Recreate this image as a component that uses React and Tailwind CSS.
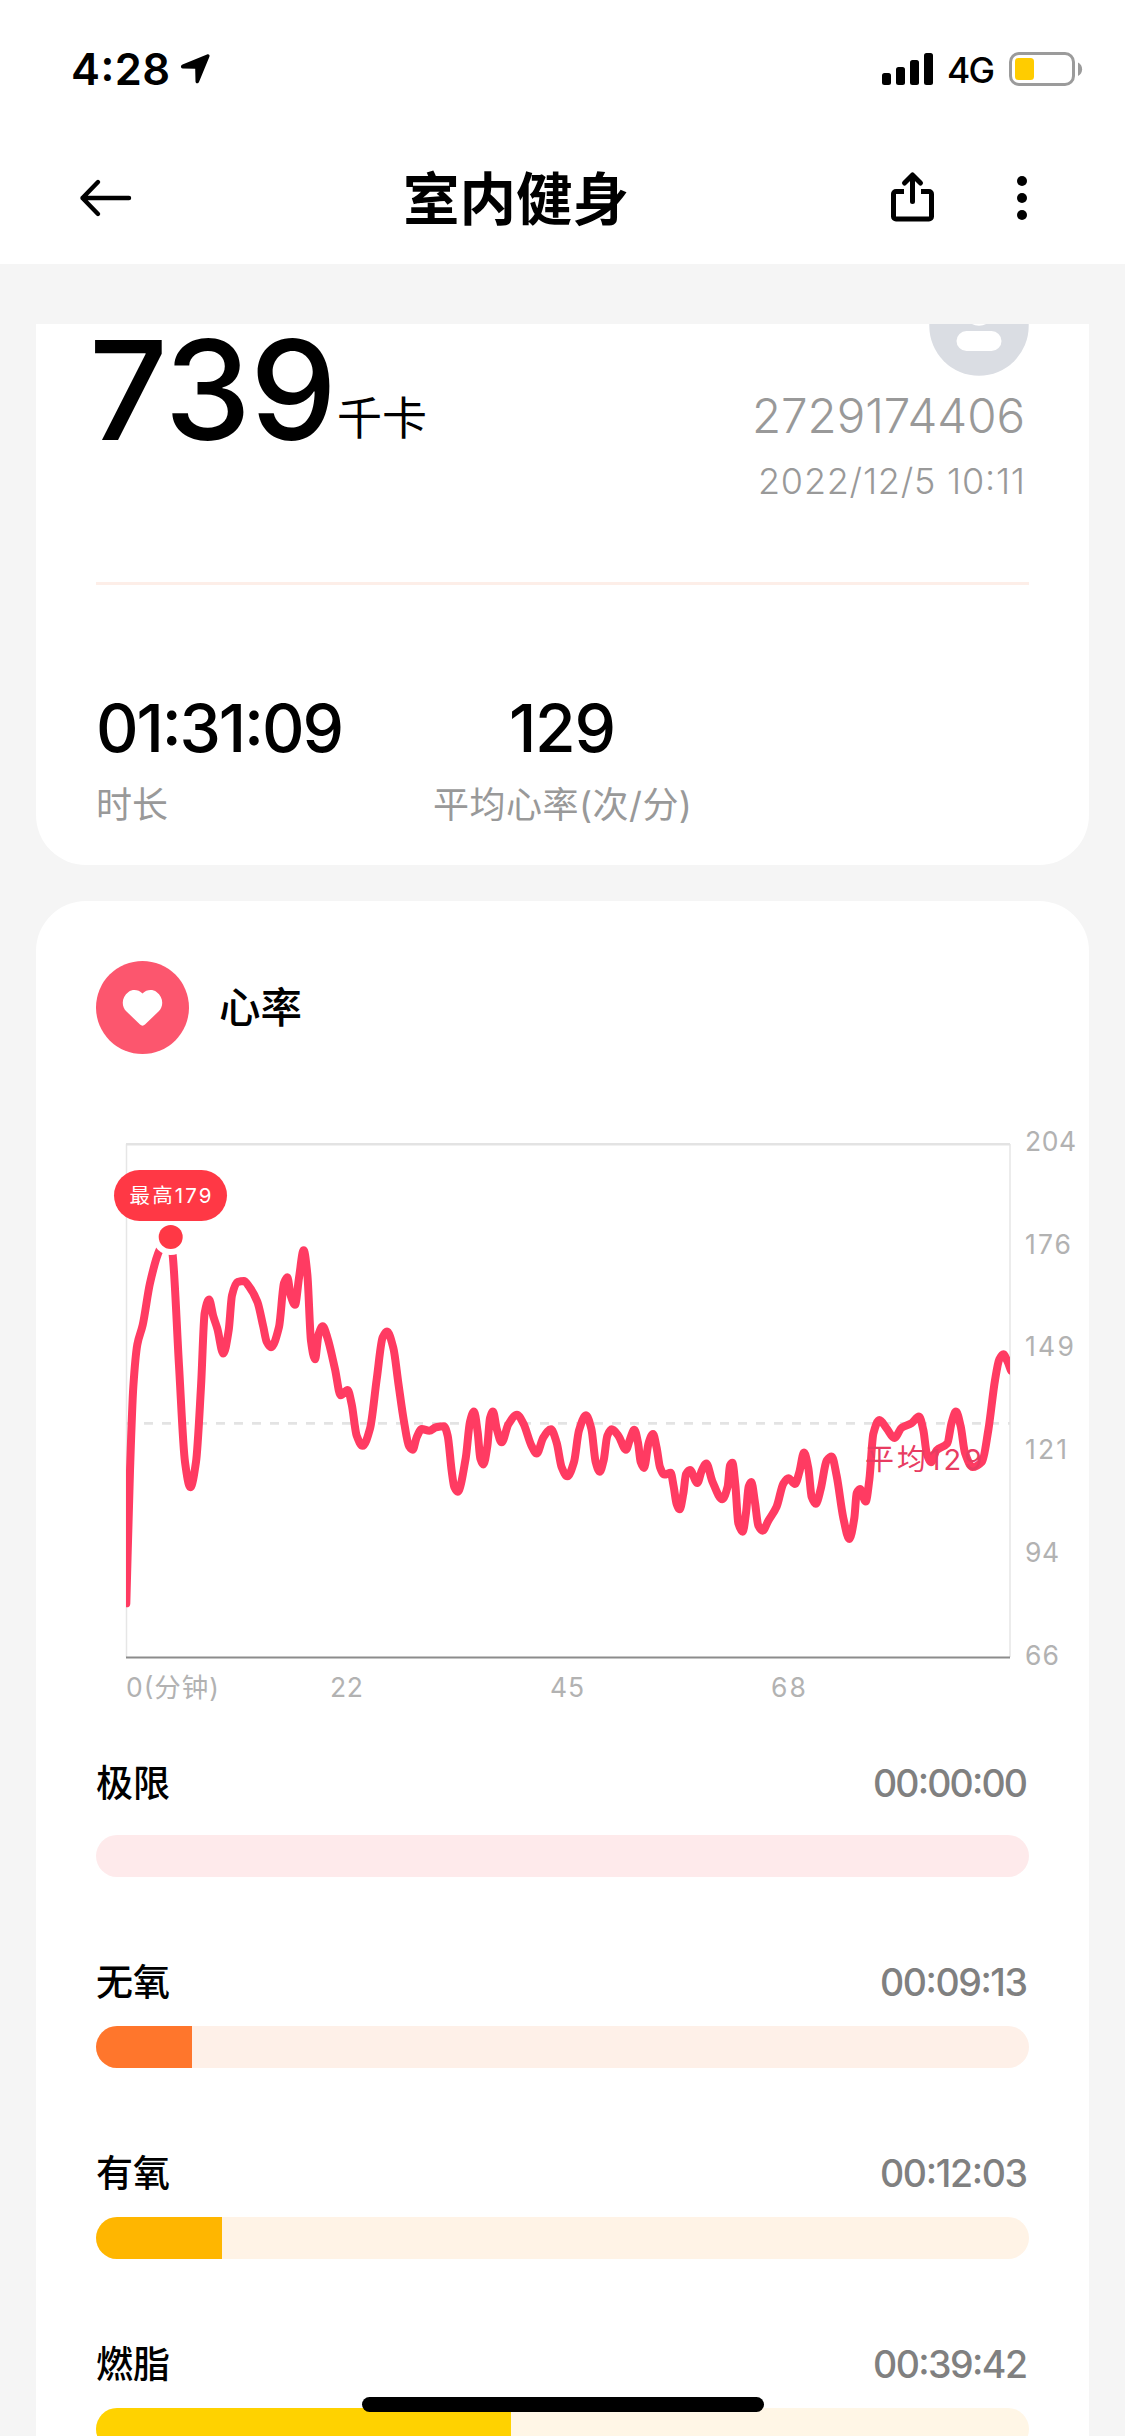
import React from "react";

const FONT = "font-['Inter','Noto_Sans_CJK_SC',sans-serif]";

const BLOCKS = [
  {
    x: 100,
    k: 2.851,
    pts: [
      [79, 1378], [90, 1000], [100, 760], [112, 640], [128, 585], [150, 465], [178, 372], [208, 330],
      [218, 385], [237, 700], [255, 975], [271, 1047], [288, 975], [303, 760], [314, 550], [327, 512],
      [340, 560], [352, 595], [370, 666], [386, 600], [396, 500], [412, 462], [432, 459], [446, 473],
      [472, 518], [490, 590], [500, 632], [513, 648], [537, 590], [552, 465], [562, 448], [572, 500],
      [585, 527], [597, 450], [611, 371], [622, 440], [633, 630], [645, 682], [656, 610], [668, 588],
      [682, 620], [705, 710], [722, 785], [743, 770], [755, 810], [770, 900], [788, 929], [810, 880],
      [830, 740], [848, 620], [861, 603], [880, 650], [895, 750], [912, 860], [927, 930], [938, 940],
      [950, 905], [965, 881], [988, 886], [1008, 876], [1032, 873], [1043, 900], [1055, 1000], [1063, 1047],
    ],
  },
  {
    x: 400,
    k: 2.851,
    pts: [
      [173, 1060], [197, 965], [210, 860], [222, 831], [233, 890], [241, 965], [250, 982], [262, 930],
      [270, 850], [279, 831], [290, 880], [305, 919], [325, 868], [351, 840], [370, 865], [395, 930],
      [410, 951], [430, 905], [453, 882], [470, 920], [485, 990], [502, 1016], [522, 975], [537, 885],
      [558, 842], [574, 880], [587, 975], [599, 1003], [611, 970], [622, 900], [635, 882], [655, 900],
      [678, 940], [690, 910], [703, 883], [714, 920], [722, 975], [732, 992], [746, 920], [759, 895],
      [770, 935], [780, 990], [793, 1011], [812, 1006], [821, 1045], [830, 1095], [839, 1110], [850, 1065],
      [858, 1010], [870, 998], [892, 1035], [905, 1000], [919, 979], [937, 1030], [967, 1081], [983, 1045],
      [990, 985], [997, 977], [1006, 1040], [1015, 1150], [1028, 1174], [1038, 1120], [1046, 1045],
    ],
  },
  {
    x: 740,
    k: 2.613,
    pts: [
      [34, 946], [45, 1000], [55, 1060], [68, 1073], [85, 1047], [110, 1010], [130, 950], [145, 936],
      [165, 951], [178, 920], [192, 869], [205, 910], [215, 985], [227, 1003], [242, 965], [260, 890],
      [275, 879], [290, 930], [310, 1040], [328, 1095], [343, 1040], [350, 975], [360, 964], [377, 997],
      [388, 940], [400, 820], [418, 784], [440, 806], [463, 831], [485, 804], [515, 792], [537, 775],
      [550, 810], [560, 870], [573, 894], [590, 863], [622, 845], [635, 790], [648, 762], [662, 800],
      [675, 870], [698, 907], [726, 893], [745, 810], [765, 680], [778, 625], [790, 612], [802, 630],
      [813, 655],
    ],
  },
];

const points = BLOCKS.flatMap(({ x, k, pts }) => pts.map(([px, py]) => [x + px / 3, 1120 + py / k]));

// Monotone cubic interpolation keeps peaks flat without overshoot.
function smoothPath(p) {
  const n = p.length;
  const d = [];
  for (let i = 0; i < n - 1; i++) d.push((p[i + 1][1] - p[i][1]) / (p[i + 1][0] - p[i][0]));
  const m = p.map((_, i) => {
    if (i === 0) return d[0];
    if (i === n - 1) return d[n - 2];
    if (d[i - 1] * d[i] <= 0) return 0;
    return (2 * d[i - 1] * d[i]) / (d[i - 1] + d[i]);
  });
  let s = `M${p[0][0]} ${p[0][1]}`;
  for (let i = 0; i < n - 1; i++) {
    const h = (p[i + 1][0] - p[i][0]) / 3;
    s += `C${p[i][0] + h} ${p[i][1] + m[i] * h} ${p[i + 1][0] - h} ${p[i + 1][1] - m[i + 1] * h} ${p[i + 1][0]} ${p[i + 1][1]}`;
  }
  return s;
}

const Y_LABELS = [
  ["204", 1151, 51],
  ["176", 1254, 46],
  ["149", 1356, 49],
  ["121", 1459, 42],
  ["94", 1562, 34],
  ["66", 1665, 34],
];

const X_LABELS = [
  ["0(分钟)", 126, 93],
  ["22", 330, 33],
  ["45", 550, 34],
  ["68", 771, 35],
];

const ZONES = [
  { name: "极限", time: "00:00:00", w: 155, fill: 0, gap: "mb-[31px]", track: "bg-[#feeaeb]", bar: "bg-[#ff3845]" },
  { name: "无氧", time: "00:09:13", w: 148, fill: 96, gap: "mb-[23px]", track: "bg-[#fef0e8]", bar: "bg-[#ff762c]" },
  { name: "有氧", time: "00:12:03", w: 148, fill: 126, gap: "mb-[23px]", track: "bg-[#fff3e6]", bar: "bg-[#ffb600]" },
  { name: "燃脂", time: "00:39:42", w: 155, fill: 415, gap: "mb-[23px]", track: "bg-[#fff6e6]", bar: "bg-[#ffd200]" },
];

// Single text run fitted to an exact advance width.
function Fit({ w, h, base, size, weight = 400, color = "#000", children }) {
  return (
    <svg width={w} height={h} className="block shrink-0 overflow-visible">
      <text x="0" y={base} fontSize={size} fontWeight={weight} fill={color} textLength={w}>
        {children}
      </text>
    </svg>
  );
}

function StatusBar() {
  return (
    <div className="flex h-[132px] items-start justify-between pt-[50px] pr-[42px] pl-[71px]">
      <div className="flex h-[38px] items-start">
        <Fit w={99} h={38} base={35} size={43.5} weight={600}>4:28</Fit>
        <svg width="32" height="38" viewBox="0 0 32 38" className="ml-[10px]">
          <path d="M2.5 14.6 27 4.4c1.800-.7 3.100.6 2.400 2.300L19 32c-.8 1.900-3.400 1.600-3.500-.6l-.3-12.600L2.800 18.500C.5 18.400 .3 15.500 2.500 14.600Z" fill="#000" />
        </svg>
      </div>
      <div className="flex h-[38px] items-start">
        <svg width="52" height="38" viewBox="0 0 52 38">
          <rect x="0" y="23" width="9" height="12" rx="2.500" />
          <rect x="14" y="17" width="9" height="18" rx="2.500" />
          <rect x="28" y="10" width="9" height="25" rx="2.500" />
          <rect x="42" y="3" width="9" height="32" rx="2.500" />
        </svg>
        <div className="ml-[13px]">
          <Fit w={48} h={38} base={33} size={35.5} weight={450}>4G</Fit>
        </div>
        <svg width="74" height="38" viewBox="0 0 74 38" className="ml-[14px]">
          <rect x="1.500" y="3.500" width="63" height="31" rx="8.500" fill="none" stroke="#9b9b9b" strokeWidth="3" />
          <rect x="6" y="8" width="19" height="22" rx="3.500" fill="#ffcc00" />
          <path d="M69 12.500c5.500 2.500 5.500 11 0 13.500Z" fill="#9b9b9b" />
        </svg>
      </div>
    </div>
  );
}

function NavBar() {
  return (
    <div className="flex h-[132px] items-center pl-[78px]">
      <svg width="56" height="44" viewBox="0 0 56 44" fill="none" stroke="#000" strokeWidth="4.400" strokeLinecap="round" strokeLinejoin="round">
        <path d="M51 22H4.500M20 6 4.500 22 20 38" />
      </svg>
      <h1 className="ml-[269px] w-[228px] pt-[4px] text-[56.500px] leading-[128px] font-bold whitespace-nowrap">室内健身</h1>
      <div className="ml-[259px] flex items-center gap-[82px]">
        <svg width="44" height="56" viewBox="0 0 44 56" fill="none" stroke="#000" strokeWidth="5" strokeLinejoin="round">
          <path d="M14 21.500H6a2.500 2.500 0 0 0-2.500 2.500v22.500A2.500 2.500 0 0 0 6 49h33a2.500 2.500 0 0 0 2.500-2.500V24a2.500 2.500 0 0 0-2.500-2.500h-8" />
          <path d="M22.500 31.500V6M14.500 13l8-8 8 8" strokeLinecap="round" />
        </svg>
        <svg width="12" height="48" viewBox="0 0 12 48">
          <circle cx="6" cy="7" r="5" />
          <circle cx="6" cy="24" r="5" />
          <circle cx="6" cy="41" r="5" />
        </svg>
      </div>
    </div>
  );
}

function SummaryCard() {
  return (
    <section className="h-[541px] rounded-b-[50px] bg-white px-[60px]">
      <div className="flex h-[258px] justify-between">
        <div className="flex items-start">
          <div className="-ml-[7px]">
            <Fit w={248} h={130} base={116} size={138} weight={540}>739</Fit>
          </div>
          <div>
            <Fit w={90} h={130} base={110.5} size={45}>千卡</Fit>
          </div>
        </div>
        <div className="flex flex-col items-end">
          <svg width="100" height="52" viewBox="0 324 100 52">
            <circle cx="50" cy="326" r="49.700" fill="#dadde3" />
            <ellipse cx="50" cy="318" rx="11" ry="7.800" fill="#fff" />
            <rect x="27.500" y="331" width="45" height="20" rx="10" fill="#fff" />
          </svg>
          <div className="mt-[20px] mr-[4px]">
            <Fit w={273} h={50} base={37} size={47.5} weight={350} color="#999">2729174406</Fit>
          </div>
          <div className="mt-[14px] mr-[4px]">
            <Fit w={267} h={50} base={34} size={36} weight={350} color="#999">2022/12/5 10:11</Fit>
          </div>
        </div>
      </div>
      <div className="h-[3px] bg-[#fdeee8]" />
      <div className="flex pt-[106px]">
        <div>
          <Fit w={248} h={80} base={60.5} size={66} weight={500}>01:31:09</Fit>
          <p className="mt-[7px] text-[36px] leading-[54px] text-[#999]">时长</p>
        </div>
        <div className="ml-[89px] flex flex-col items-center">
          <Fit w={107} h={80} base={60.5} size={66} weight={500}>129</Fit>
          <div className="mt-[7px]">
            <Fit w={259} h={54} base={40} size={36} color="#999">平均心率(次/分)</Fit>
          </div>
        </div>
      </div>
    </section>
  );
}

function Chart() {
  return (
    <svg width="1053" height="610" viewBox="36 1110 1053 610" className="block">
      <defs>
        <clipPath id="plot">
          <rect x="126" y="1140" width="884" height="520" />
        </clipPath>
      </defs>
      <path d="M126.500 1657V1144M1010 1144V1657" stroke="#e6e6e6" strokeWidth="1.500" fill="none" />
      <path d="M126 1144.300H1010" stroke="#e3e3e3" strokeWidth="2.500" />
      <path d="M126 1423.400H1010" stroke="#e3e3e3" strokeWidth="2.600" strokeDasharray="9 9" />
      <path d="M126 1657.600H1010" stroke="#8c8c8c" strokeWidth="2" />
      <path d={smoothPath(points)} fill="none" stroke="#ff3b62" strokeWidth="8" strokeLinejoin="round" strokeLinecap="round" clipPath="url(#plot)" />
      <circle cx="170.700" cy="1237" r="18" fill="#fff" />
      <circle cx="170.700" cy="1237" r="12" fill="#ff3845" />
      <rect x="114" y="1170" width="113" height="51" rx="25.500" fill="#ff3845" />
      <text x="129.500" y="1203" fontSize="20.500" fill="#fff" textLength="82">最高179</text>
      <text x="865" y="1469.500" fontSize="29" fill="#e83c62" textLength="117">平均129</text>
      {Y_LABELS.map(([t, y, w]) => (
        <text key={t} x="1025" y={y} fontSize="26.500" fill="#b2b2b2" textLength={w}>
          {t}
        </text>
      ))}
      {X_LABELS.map(([t, x, w]) => (
        <text key={t} x={x} y="1696.500" fontSize="26.500" fill="#b2b2b2" textLength={w}>
          {t}
        </text>
      ))}
    </svg>
  );
}

function Zone({ zone }) {
  return (
    <div>
      <div className={`flex h-[42px] items-center justify-between ${zone.gap}`}>
        <span className="pt-[2px] text-[37px] leading-[42px] font-medium whitespace-nowrap">{zone.name}</span>
        <div className="mr-[1px]">
          <Fit w={zone.w} h={42} base={34.5} size={37.5} weight={450} color="#808080">{zone.time}</Fit>
        </div>
      </div>
      <div className={`h-[42px] overflow-hidden rounded-full ${zone.track}`}>
        <div className={`h-full ${zone.bar}`} style={{ width: zone.fill }} />
      </div>
    </div>
  );
}

function HeartRateCard() {
  return (
    <section className="mt-[36px] h-[1700px] rounded-[50px] bg-white pt-[60px]">
      <div className="flex items-center gap-[30px] pl-[60px]">
        <svg width="93" height="93" viewBox="0 0 93 93">
          <circle cx="46.500" cy="46.500" r="46.500" fill="#fc566e" />
          <path d="M46.500 32.500c-4-4-10-4.500-14-1.500-7 5-7.500 14-2 19.500l13.500 13c1.500 1.500 3.500 1.500 5 0l13.500-13c5.500-5.500 5-14.500-2-19.500-4-3-10-2.500-14 1.500Z" fill="#fff" />
        </svg>
        <h2 className="text-[41.500px] leading-[60px] font-medium">心率</h2>
      </div>
      <div className="mt-[56px]">
        <Chart />
      </div>
      <div className="flex flex-col px-[60px] pt-[42px]">
        <Zone zone={ZONES[0]} />
        <div className="mt-[84px] flex flex-col gap-[84px]">
          {ZONES.slice(1).map((z) => (
            <Zone key={z.name} zone={z} />
          ))}
        </div>
      </div>
    </section>
  );
}

export default function App() {
  return (
    <div className={`relative h-[2436px] w-[1125px] overflow-hidden bg-[#f5f5f5] text-black ${FONT}`}>
      <header className="h-[264px] bg-white">
        <StatusBar />
        <NavBar />
      </header>
      <main className="px-[36px] pt-[60px]">
        <SummaryCard />
        <HeartRateCard />
      </main>
      <div className="absolute bottom-[24px] left-[362px] h-[15px] w-[402px] rounded-full bg-black" />
    </div>
  );
}
